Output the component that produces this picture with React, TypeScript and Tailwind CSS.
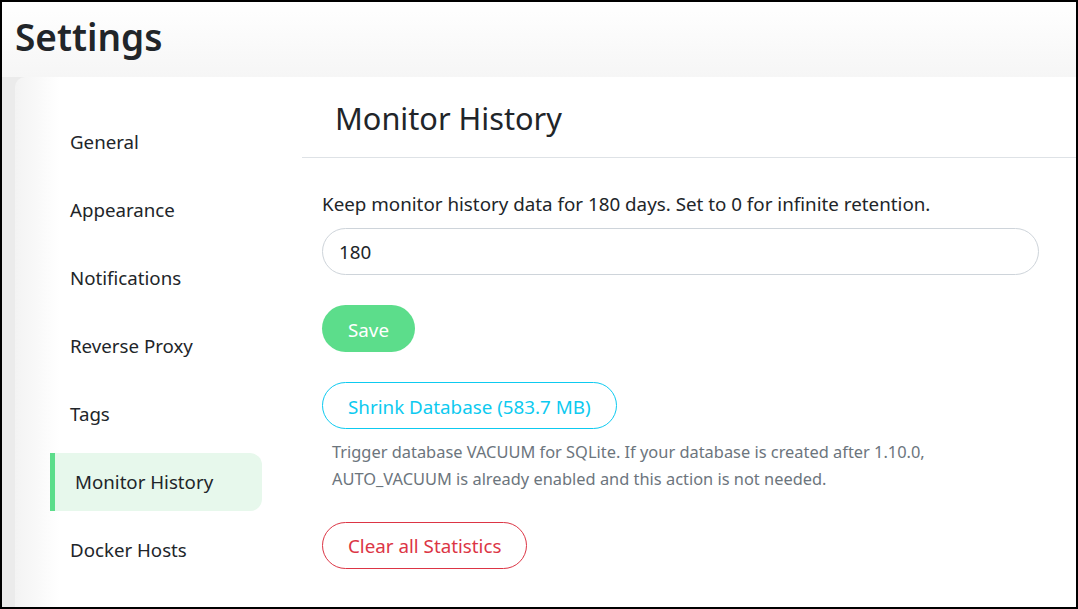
import React from "react";

const items = [
  "General",
  "Appearance",
  "Notifications",
  "Reverse Proxy",
  "Tags",
  "Monitor History",
  "Docker Hosts",
];

export default function App() {
  return (
    <div className="w-[1078px] h-[609px] border-2 border-black overflow-hidden bg-white font-['Noto_Sans',sans-serif] text-[#212529]">
      <div className="h-[75px] flex items-center pl-[13px] pb-[6px] bg-[linear-gradient(to_bottom,#ffffff,#f6f6f6)]">
        <h1 className="text-[37px] font-semibold leading-none">Settings</h1>
      </div>
      <div className="bg-[#ebebeb] pl-[13px] h-[600px]">
        <div className="w-[1100px] h-[600px] rounded-[10px] bg-[linear-gradient(to_right,#f3f3f3,#ffffff_45px)] flex">
          <div className="w-[287px] shrink-0 pl-[35px] pt-[36px] flex flex-col gap-[10px]">
            {items.map((it) => {
              const active = it === "Monitor History";
              return (
                <div
                  key={it}
                  className={
                    active
                      ? "w-[212px] h-[58px] flex items-center pl-[20px] border-l-[5px] border-[#5cdd8b] bg-[#e7f8ec] rounded-r-[12px] text-[18.7px]"
                      : "w-[212px] h-[58px] flex items-center pl-[20px] text-[18.7px]"
                  }
                >
                  {it}
                </div>
              );
            })}
          </div>
          <div className="flex-1 flex flex-col">
            <div className="h-[81px] border-b border-[#dee2e6] pl-[33px] pt-[2px] flex items-center">
              <h2 className="text-[30.7px] leading-none">Monitor History</h2>
            </div>
            <div className="pl-[20px] pt-[31px] flex flex-col items-start">
              <div className="text-[18.8px] leading-[30px] mb-[9px]">
                Keep monitor history data for 180 days. Set to 0 for infinite retention.
              </div>
              <div className="w-[717px] h-[47px] rounded-full border border-[#ced4da] flex items-center pl-[16px] pt-[2px] text-[18.8px]">
                180
              </div>
              <button className="mt-[30px] h-[47px] w-[93px] pt-[3px] rounded-full bg-[#5cdd8b] text-white text-[18.8px]">
                Save
              </button>
              <button className="mt-[30px] h-[47px] px-[25px] pt-[3px] rounded-full border border-[#0dcaf0] text-[#0dcaf0] text-[18.8px]">
                Shrink Database (583.7 MB)
              </button>
              <div className="mt-[9px] ml-[10px] text-[16.4px] leading-[27px] text-[#6c757d]">
                Trigger database VACUUM for SQLite. If your database is created after 1.10.0,
                <br />
                AUTO_VACUUM is already enabled and this action is not needed.
              </div>
              <button className="mt-[30px] h-[47px] px-[25px] pt-[2px] rounded-full border border-[#dc3545] text-[#dc3545] text-[18.8px]">
                Clear all Statistics
              </button>
            </div>
          </div>
        </div>
      </div>
    </div>
  );
}
